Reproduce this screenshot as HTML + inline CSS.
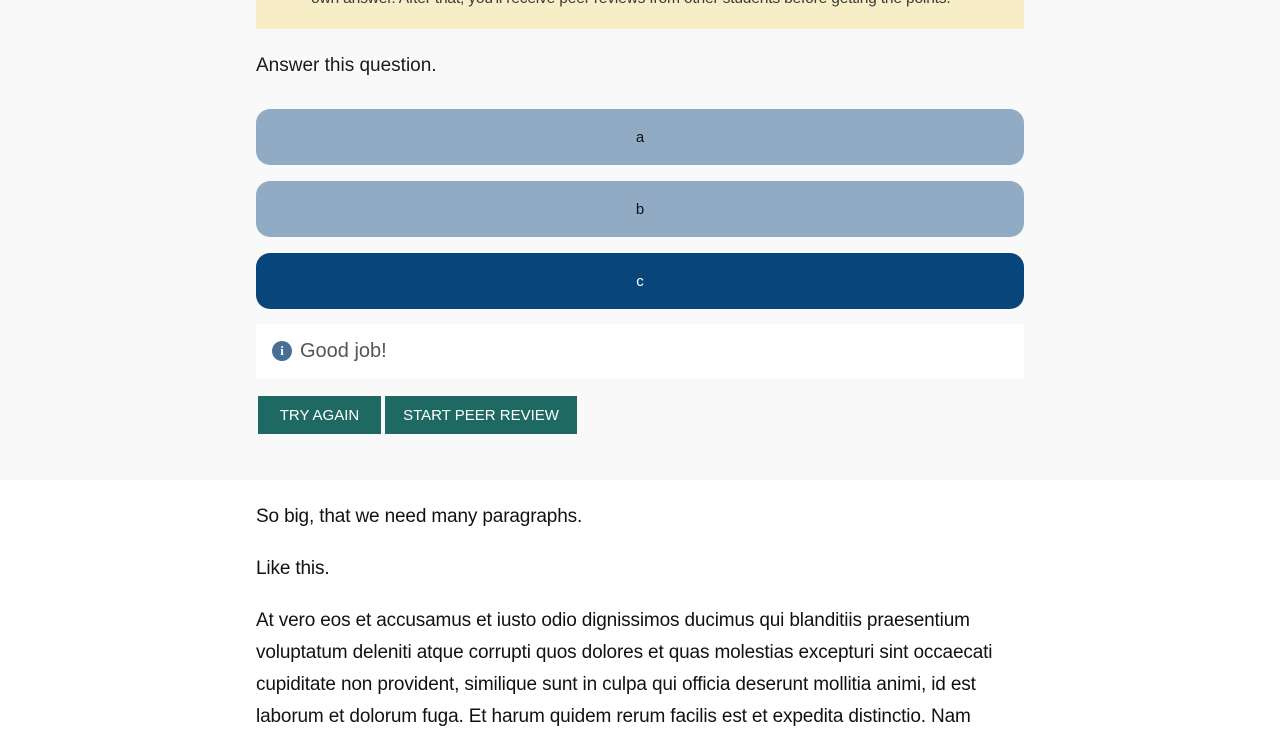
<!DOCTYPE html>
<html><head><style>
body{margin:0;width:1280px;height:720px;overflow:hidden;background:#fff;font-family:"Liberation Sans",sans-serif;}
.top{position:absolute;left:0;top:0;width:1280px;height:480px;background:#f9f9f9;}
.warn{position:absolute;left:256px;top:0;width:768px;height:29px;background:#f7edc6;}
.warn span{position:absolute;left:55px;top:-10px;font-size:15.6px;color:#3a3a3a;white-space:nowrap;letter-spacing:-0.2px}
.q{position:absolute;left:256px;top:55px;font-size:19px;color:#1a1a1a;}
.opt{position:absolute;left:256px;width:768px;height:56px;border-radius:14px;background:#91abc5;text-align:center;line-height:58px;font-size:15px;color:#111;}
.sel{background:#08457a;color:#fff;}
.fb{position:absolute;left:256px;top:324px;width:768px;height:54px;background:#fff;}
.fb .ic{position:absolute;left:16px;top:17px;width:20px;height:20px;border-radius:50%;background:#476f96;color:#fff;font-weight:bold;font-size:13px;text-align:center;line-height:20px;font-family:"Liberation Serif",serif}
.fb span{position:absolute;left:44px;top:16px;font-size:20px;color:#555;}
.btn{position:absolute;top:396px;height:38px;background:#1e6a63;color:#fff;font-size:15px;line-height:39px;text-align:center;}
p{position:absolute;left:256px;margin:0;font-size:19px;color:#111;width:780px;line-height:32px;letter-spacing:-0.15px}
</style></head><body>
<div class="top"></div>
<div class="warn"><span>own answer. After that, you'll receive peer reviews from other students before getting the points.</span></div>
<div class="q">Answer this question.</div>
<div class="opt" style="top:109px">a</div>
<div class="opt" style="top:181px">b</div>
<div class="opt sel" style="top:253px">c</div>
<div class="fb"><div class="ic">i</div><span>Good job!</span></div>
<div class="btn" style="left:258px;width:123px">TRY AGAIN</div>
<div class="btn" style="left:385px;width:192px">START PEER REVIEW</div>
<p style="top:501px">So big, that we need many paragraphs.</p>
<p style="top:553px">Like this.</p>
<p style="top:605px">At vero eos et accusamus et iusto odio dignissimos ducimus qui blanditiis praesentium voluptatum deleniti atque corrupti quos dolores et quas molestias excepturi sint occaecati cupiditate non provident, similique sunt in culpa qui officia deserunt mollitia animi, id est laborum et dolorum fuga. Et harum quidem rerum facilis est et expedita distinctio. Nam</p>
</body></html>
